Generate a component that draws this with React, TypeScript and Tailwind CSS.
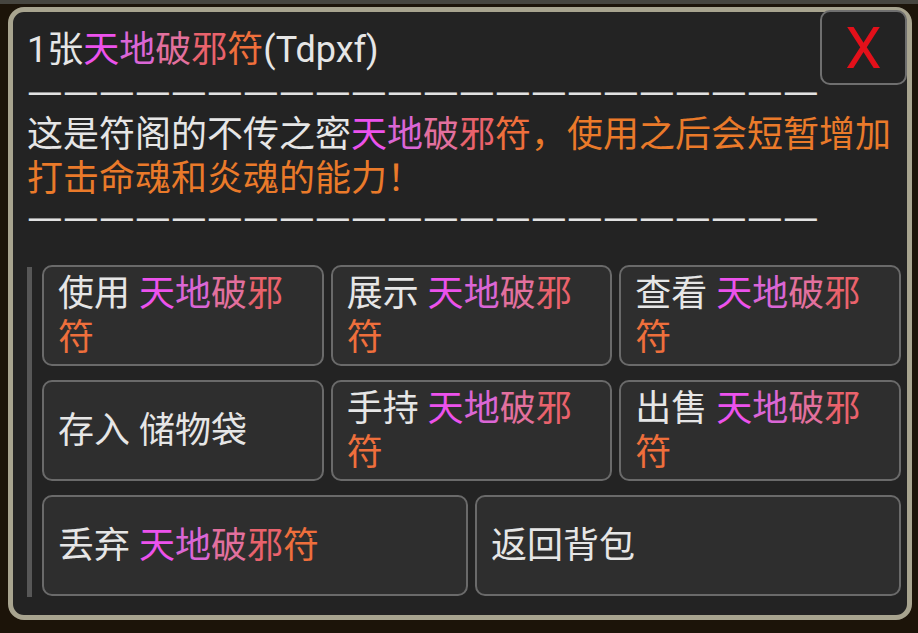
import React from "react";

const FONT = "font-['Roboto','Noto_Sans_CJK_SC',sans-serif]";

// per-character gradient of the item name
const NAME_COLORS = ["#ec52ec", "#da66d6", "#e2709e", "#e9626c", "#ef6f3c"];

function ItemName({ text = "天地破邪符" }: { text?: string }) {
  return (
    <>
      {text.split("").map((ch, i) => (
        <span key={i} style={{ color: NAME_COLORS[i] }}>
          {ch}
        </span>
      ))}
    </>
  );
}

function Divider({ className = "" }: { className?: string }) {
  return (
    <div
      className={`text-[40px] leading-[42px] font-['Noto_Sans_CJK_SC',sans-serif] whitespace-nowrap text-[#e2e2e2] ${className}`}
    >
      {Array.from({ length: 22 }).map((_, i) => (
        <span key={i} className="inline-block w-[36px]">
          —
        </span>
      ))}
    </div>
  );
}

function ActionButton({
  verb,
  target,
  span,
}: {
  verb: string;
  target?: React.ReactNode;
  span: string;
}) {
  return (
    <button
      className={`${span} h-[101px] flex items-center text-left rounded-[10px] border-2 border-[#6a6a6a] bg-[#2e2e2e] pl-[14px] pr-[16px] text-[36px] leading-[44px] text-[#e6e6e6]`}
    >
      <span>
        {verb} {target}
      </span>
    </button>
  );
}

export default function App() {
  return (
    <div
      className={`${FONT} w-[918px] h-[633px] bg-[#1c1409] border-t-[4px] border-[#46453f] pt-[3px] pl-[8px] pr-[6px] overflow-hidden`}
    >
      <div className="relative h-[613px] rounded-[16px] border-[5px] border-[#a8a48f] bg-[#232323] pl-[14px] pr-[6px] pt-[17px]">
        <button className="absolute -top-[2px] right-0 w-[87px] h-[75px] rounded-[10px] border-2 border-[#6f6f6f] bg-[#232323] flex items-center justify-center text-[58px] leading-none text-[#e3101a] font-['Roboto',sans-serif]">
          X
        </button>

        <div className="text-[#e6e6e6]">
          <div className="text-[36px] leading-[42px]">
            1张<ItemName />(Tdpxf)
          </div>
          <Divider className="-mt-[4px] mb-[4px]" />
          <div className="text-[36px] leading-[44px]">
            这是符阁的不传之密<ItemName />
            <span className="text-[#ea7a2a]">，使用之后会短暂增加打击命魂和炎魂的能力！</span>
          </div>
          <Divider className="-mt-[8px] mb-[4px]" />
        </div>

        <div className="flex mt-[30px]">
          <div className="w-[5px] mt-[2px] h-[330px] bg-[#575757]" />
          <div className="ml-[10px] flex-1 grid grid-cols-6 gap-x-[7px] gap-y-[13px]">
            <ActionButton span="col-span-2" verb="使用" target={<ItemName />} />
            <ActionButton span="col-span-2" verb="展示" target={<ItemName />} />
            <ActionButton span="col-span-2" verb="查看" target={<ItemName />} />
            <ActionButton span="col-span-2" verb="存入" target="储物袋" />
            <ActionButton span="col-span-2" verb="手持" target={<ItemName />} />
            <ActionButton span="col-span-2" verb="出售" target={<ItemName />} />
            <ActionButton span="col-span-3" verb="丢弃" target={<ItemName />} />
            <ActionButton span="col-span-3" verb="返回背包" />
          </div>
        </div>
      </div>
    </div>
  );
}
